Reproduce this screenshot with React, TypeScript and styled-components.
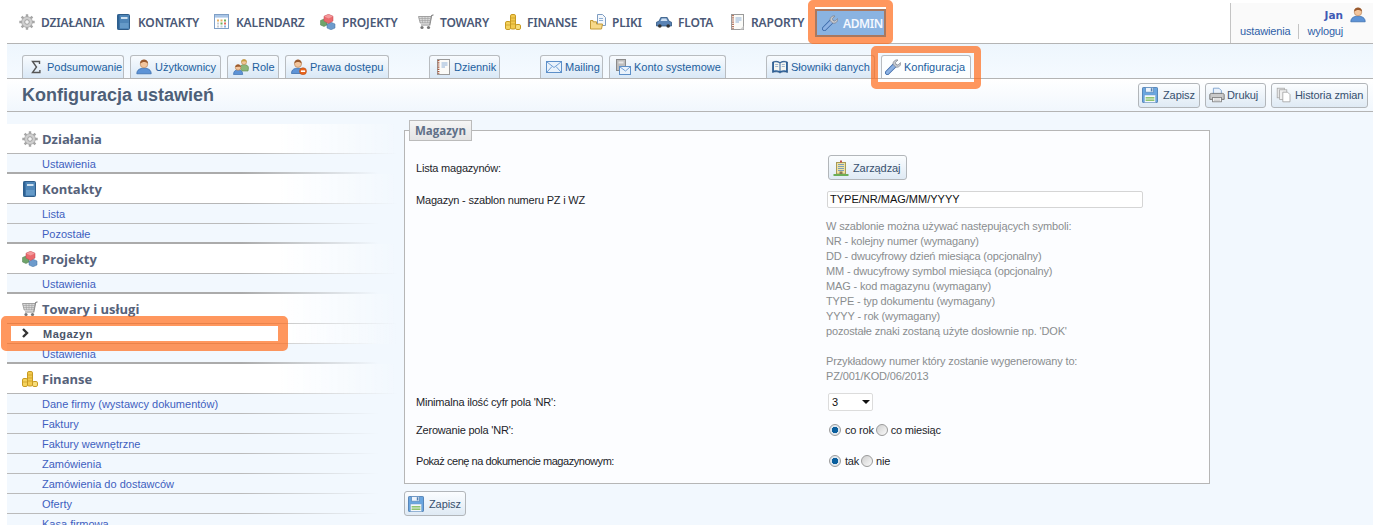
import React from "react";
import styled, { createGlobalStyle } from "styled-components";

const Global = createGlobalStyle`
  html, body { margin: 0; padding: 0; height: 525px; overflow: hidden; background: #fff; }
  body { font-family: "Liberation Sans", "Noto Sans", sans-serif; font-size: 11px; color: #222; }
`;

const Page = styled.div`
  position: relative;
  width: 1373px;
  height: 525px;
  overflow: hidden;
  padding-left: 7px;
  box-sizing: border-box;
`;

/* ---------- icons ---------- */
type IconProps = { size?: number };
const Svg = styled.svg`
  flex: none;
  display: block;
`;
const I: React.FC<IconProps & { children: React.ReactNode }> = ({ size = 16, children }) => (
  <Svg width={size} height={size} viewBox="0 0 16 16">{children}</Svg>
);

const Gear = (p: IconProps) => (
  <I {...p}>
    <g stroke="#a6a6a6" strokeWidth="2.400">
      <path d="M8 0.300v3M8 12.700v3M0.300 8h3M12.700 8h3M2.600 2.600l2 2M11.400 11.400l2 2M13.400 2.600l-2 2M4.600 11.400l-2 2" />
    </g>
    <circle cx="8" cy="8" r="5.400" fill="#cfcfcf" stroke="#a0a0a0" strokeWidth=".7" />
    <circle cx="8" cy="8" r="2.300" fill="#f4f4f4" stroke="#929292" strokeWidth=".8" />
  </I>
);
const Book = (p: IconProps) => (
  <I {...p}>
    <rect x="1.500" y="0.500" width="12" height="15" rx="1" fill="#4f86b8" stroke="#2f5c88" />
    <rect x="1.500" y="0.500" width="2" height="15" fill="#2f6294" />
    <rect x="5" y="3" width="6.500" height="2" fill="#cfe1f0" />
    <rect x="4" y="9" width="8.500" height="5" fill="#659ac8" />
  </I>
);
const Calendar = (p: IconProps) => (
  <I {...p}>
    <rect x="0.500" y="0.500" width="14" height="14" fill="#fff" stroke="#7f9fc6" />
    <rect x="1" y="1" width="13" height="2.600" fill="#a9c5e6" />
    <path d="M3 5.500h2v2H3zM6.500 5.500h2v2h-2z" fill="#e8b060" />
    <path d="M10 5.500h2v2h-2zM6.500 8.500h2v2h-2z" fill="#6fae58" />
    <path d="M3 8.500h2v2H3zM3 11.500h2v2H3zM6.500 11.500h2v2h-2z" fill="#c8cdd3" />
    <path d="M10 8.500h2v2h-2z" fill="#e26a5a" />
    <path d="M10 11.500h2v2h-2z" fill="#8ab2dc" />
  </I>
);
const Cubes = (p: IconProps) => (
  <I {...p}>
    <path d="M0.500 6.500 4 5l3 1.500V11l-3 1.500L0.500 11z" fill="#6fa36a" stroke="#4f7d4e" strokeWidth=".5" />
    <path d="M7 10 11 8.200l4 1.800v4L11 15.800 7 14z" fill="#6d9bcc" stroke="#43709f" strokeWidth=".5" />
    <path d="M4 2.200 8.500 0.300 13 2.200V7L8.500 9.400 4 7z" fill="#ea6a6e" stroke="#c04850" strokeWidth=".5" />
    <path d="M4.200 2.400 8.500 4.400l4.400-2-4.400-1.800z" fill="#f49a9c" />
  </I>
);
const Cart = (p: IconProps) => (
  <I {...p}>
    <path d="M15.500 0.800 13.600 1.600 11.800 11H3" fill="none" stroke="#8a8a8a" strokeWidth="1.200" />
    <path d="M0.500 2.500h12.600L11.900 9H2.200z" fill="#dadada" stroke="#8f8f8f" strokeWidth=".8" />
    <path d="M1 4.500h11.500M1.500 6.500h10.500M4 2.500l.6 6.500M7 2.500V9M10 2.500 9.600 9" stroke="#9d9d9d" strokeWidth=".6" fill="none" />
    <circle cx="4" cy="13.500" r="1.600" fill="#777" />
    <circle cx="10.500" cy="13.500" r="1.600" fill="#777" />
  </I>
);
const Coins = (p: IconProps) => (
  <I {...p}>
    <rect x="5.500" y="0.500" width="5" height="14.500" rx="1.400" fill="#f2c94c" stroke="#c79a22" />
    <rect x="0.500" y="7.500" width="5" height="8" rx="1.400" fill="#f4d35e" stroke="#c79a22" />
    <rect x="10.500" y="10.500" width="5" height="5" rx="1.400" fill="#f7dd7a" stroke="#c79a22" />
    <path d="M6 4h4M6 7h4M6 10h4M1 11h4" stroke="#c79a22" strokeWidth=".7" />
  </I>
);
const Folder = (p: IconProps) => (
  <I {...p}>
    <path d="M7.500 0.500h5l3 3v8h-8z" fill="#f4f7fb" stroke="#7d9cc2" />
    <path d="M9 4.500h4M9 6.500h4" stroke="#8fb0d6" />
    <path d="M0.500 6.500V15h11l1-5H6.500V7.800H3V6.500z" fill="#f7d98a" stroke="#c39a38" />
  </I>
);
const Car = (p: IconProps) => (
  <I {...p}>
    <path d="M3 7.200 4.800 3.500h6.400L13 7.200l2.500 1V12H.5V8.200z" fill="#5a83b4" stroke="#2e5580" strokeWidth=".8" />
    <path d="M4.600 7 5.700 4.600h4.600L11.400 7z" fill="#cfe0f2" />
    <circle cx="3.800" cy="12" r="1.800" fill="#333" />
    <circle cx="12.200" cy="12" r="1.800" fill="#333" />
  </I>
);
const Report = (p: IconProps) => (
  <I {...p}>
    <rect x="2.500" y="0.500" width="12" height="15" fill="#fbfbf8" stroke="#9b9b9b" />
    <path d="M4 1v14" stroke="#a8563a" strokeWidth="1.600" strokeDasharray="1.200 1" />
    <path d="M6.500 4h6M6.500 6h6M6.500 8h3.500" stroke="#8fb0d6" />
    <path d="M11 15.500 14.500 12v3.500z" fill="#cfcfcf" />
  </I>
);
const Wrench = (p: IconProps) => (
  <I {...p}>
    <path d="M2.400 13.600 9.200 6.800" stroke="#3a68a8" strokeWidth="4.800" strokeLinecap="round" />
    <path d="M2.400 13.600 9.200 6.800" stroke="#8db2e3" strokeWidth="3.200" strokeLinecap="round" />
    <path d="M8 5.400C7.800 2.600 10 .4 13 1l-2.600 2.500.6 2 2 .6L15.500 3.600c.5 3-1.600 5-4.600 4.600z" fill="#c8ccd2" stroke="#7c8088" strokeWidth=".7" />
  </I>
);
const Sigma = (p: IconProps) => (
  <I {...p}>
    <path d="M11.500 5V2.500H4.500L8.500 8 4.500 13.500h7.400V11" fill="none" stroke="#555" strokeWidth="1.400" />
  </I>
);
const User = (p: IconProps) => (
  <I {...p}>
    <path d="M0.800 14.800c0-4 3-5.600 7.200-5.600s7.200 1.600 7.200 5.600z" fill="#5d93d6" stroke="#2f64a8" strokeWidth=".7" />
    <circle cx="8" cy="5" r="3.800" fill="#f3c59c" stroke="#b07c50" strokeWidth=".6" />
    <path d="M4 4.600C4 1.800 6 .6 8 .6s4 1.200 4 4c-1.500-1.200-3-1.600-4-1.600S5.400 3.500 4 4.600z" fill="#9a5a2e" />
  </I>
);
const Users = (p: IconProps) => (
  <I {...p}>
    <path d="M7 9c0-2.500 1.800-3.400 4-3.400s4.500.9 4.500 3.400L15 12H9z" fill="#8db77a" stroke="#5b8b4c" strokeWidth=".6" />
    <circle cx="11" cy="3" r="2.600" fill="#f0c69a" stroke="#b8884c" strokeWidth=".6" />
    <path d="M8.400 2.800C8.400 1 10 .4 11 .4s2.600.6 2.600 2.400c-1-.8-4-.8-5.200 0z" fill="#c8a040" />
    <path d="M0.500 15.500c0-3.500 1.900-4.600 4.600-4.600s4.600 1.100 4.600 4.600z" fill="#5d93d6" stroke="#2f64a8" strokeWidth=".6" />
    <circle cx="5.100" cy="8.400" r="2.800" fill="#f3c59c" stroke="#b07c50" strokeWidth=".6" />
    <path d="M2.300 8.300C2.300 6.500 3.800 5.600 5.100 5.600S7.900 6.500 7.900 8.300c-1-.8-4.600-.8-5.600 0z" fill="#9a5a2e" />
  </I>
);
const UserBlock = (p: IconProps) => (
  <I {...p}>
    <path d="M0.500 14.500c0-4 2.700-5.300 6.500-5.300s6.500 1.300 6.500 5.300z" fill="#5d93d6" stroke="#2f64a8" strokeWidth=".7" />
    <circle cx="7" cy="4.800" r="3.600" fill="#f3c59c" stroke="#b07c50" strokeWidth=".6" />
    <path d="M3.400 4.500C3.400 1.800 5.200.6 7 .6s3.600 1.200 3.600 3.900C9.200 3.400 8 3 7 3S4.700 3.400 3.400 4.500z" fill="#9a5a2e" />
    <circle cx="12" cy="12.200" r="3.500" fill="#e8641e" stroke="#b04a10" strokeWidth=".5" />
    <rect x="9.900" y="11.400" width="4.200" height="1.600" fill="#fff" />
  </I>
);
const Journal = (p: IconProps) => (
  <I {...p}>
    <rect x="2.500" y="0.500" width="12" height="15" fill="#fbfbf8" stroke="#9b9b9b" />
    <path d="M3.500 1v14" stroke="#a8563a" strokeWidth="1.800" strokeDasharray="1.200 1" />
    <path d="M6.500 4h6M6.500 6h6M6.500 8h3.500" stroke="#8fb0d6" />
  </I>
);
const Mail = (p: IconProps) => (
  <I {...p}>
    <rect x="0.500" y="2.500" width="15" height="11" fill="#e9f2fb" stroke="#5d8fc8" />
    <path d="M1 3l7 5.500L15 3M1 13l5-5.500M15 13l-5-5.500" fill="none" stroke="#6f9fd6" />
  </I>
);
const SysMail = (p: IconProps) => (
  <I {...p}>
    <rect x="1.500" y="0.500" width="9" height="11" fill="#bdbdbd" stroke="#8a8a8a" />
    <rect x="3.500" y="2.500" width="5" height="2" fill="#e6e6e6" />
    <rect x="4.500" y="7.500" width="11" height="8" fill="#e9f2fb" stroke="#5d8fc8" />
    <path d="M5 8l5.500 4L15 8" fill="none" stroke="#6f9fd6" />
  </I>
);
const OpenBook = (p: IconProps) => (
  <I {...p}>
    <path d="M0.500 3C3 2 6 2 8 3.500 10 2 13 2 15.500 3v10.500C13 12.500 10 12.500 8 14c-2-1.500-5-1.500-7.500-.5z" fill="#2f639c" stroke="#1f4a78" strokeWidth=".6" />
    <path d="M2 3.500C4 3 6 3 7.500 4.200V12C6 11 4 11 2 11.500zM14 3.500C12 3 10 3 8.500 4.200V12C10 11 12 11 14 11.500z" fill="#f6f6f0" />
    <path d="M3.200 5.500h3M3.200 7.500h3M9.800 5.500h3M9.800 7.500h3" stroke="#8aa6c4" strokeWidth=".8" />
  </I>
);
const Floppy = ({ size = 16 }: IconProps) => (
  <Svg width={size} height={size} viewBox="0 0 20 20">
    <rect x="0.500" y="0.500" width="19" height="19" rx="1.500" fill="#6aa6e0" stroke="#3b6da6" />
    <rect x="4.500" y="0.500" width="10" height="6" fill="#eef4fb" stroke="#5f8ebf" />
    <rect x="11" y="1.500" width="2" height="4" fill="#4f7fb4" />
    <rect x="3" y="10" width="14" height="9.500" fill="#f4f8fc" stroke="#6f9ac8" strokeWidth=".6" />
    <rect x="4.500" y="12.500" width="11" height="2" fill="#8fc46f" />
    <rect x="4.500" y="15.500" width="11" height="2" fill="#8fc46f" />
  </Svg>
);
const Printer = ({ size = 16 }: IconProps) => (
  <Svg width={size} height={size} viewBox="0 0 20 20">
    <path d="M5.500 1.500h7l3 3v6h-10z" fill="#e9f1fb" stroke="#6d95c6" />
    <path d="M1 10c0-1.500 1-2 2-2h14c1 0 2 .5 2 2v5.500H1z" fill="#c9c9c9" stroke="#666" />
    <rect x="4.500" y="13" width="11" height="5.500" fill="#fafafa" stroke="#777" />
    <path d="M6 15h8M6 16.800h8" stroke="#aaa" strokeWidth=".7" />
  </Svg>
);
const Copies = ({ size = 16 }: IconProps) => (
  <Svg width={size} height={size} viewBox="0 0 20 20">
    <rect x="1.500" y="1.500" width="9" height="12" fill="#e8e8e8" stroke="#a8a8a8" />
    <rect x="4.500" y="3.500" width="9" height="12" fill="#f0f0f0" stroke="#a8a8a8" />
    <path d="M8.500 6.500h6l3 3v9h-9z" fill="#fff" stroke="#a0a0a0" />
  </Svg>
);
const Building = (p: IconProps) => (
  <I {...p}>
    <rect x="3.500" y="2.500" width="9" height="11.500" fill="#efe2a4" stroke="#a89a55" />
    <path d="M5 4.500h6M5 6.500h6M5 8.500h6M5 10.500h6" stroke="#7f9fb8" />
    <rect x="6.500" y="11.500" width="3" height="3" fill="#8a7a50" />
    <path d="M7 0.500h2v2H7z" fill="#c0504d" />
    <path d="M0.500 15h15" stroke="#6bae56" strokeWidth="2" />
  </I>
);

/* ---------- top bar ---------- */
const TopBar = styled.header`
  display: flex;
  height: 43px;
  border-bottom: 1px solid #b4b4b4;
  box-sizing: content-box;
`;
const MainNav = styled.nav`
  display: flex;
  align-items: center;
  flex: 1;
  padding: 3px 0 0 12px;
  gap: 15px;
`;
const NavItem = styled.a<{ $w?: number }>`
  display: flex;
  align-items: center;
  flex: none;
  gap: 6px;
  width: ${(p) => (p.$w ? `${p.$w}px` : "auto")};
  margin-bottom: 2px;
  font-family: "Noto Sans", sans-serif;
  font-size: 12px;
  font-weight: 600;
  letter-spacing: -0.15px;
  white-space: nowrap;
  color: #4a5876;
`;
const AdminItem = styled(NavItem)`
  gap: 5px;
  width: 71px;
  height: 28px;
  margin: 0 0 0 -5px;
  padding-left: 5px;
  box-sizing: border-box;
  border: 2px solid #a9785f;
  background: #8ab3e1;
  color: #f4f8ff;
  letter-spacing: -0.4px;
`;
const UserBox = styled.div`
  width: 143px;
  margin-top: 3px;
  border-left: 1px solid #c4c4c4;
  background: #fafafa;
  box-sizing: border-box;
  padding: 2px 7px 0 9px;
`;
const UserName = styled.div`
  display: flex;
  justify-content: flex-end;
  align-items: center;
  gap: 7px;
  height: 19px;
  font-family: "DejaVu Sans", sans-serif;
  font-size: 10.5px;
  font-weight: 700;
  color: #3f5bb5;
`;
const UserLinks = styled.div`
  display: flex;
  align-items: center;
  font-size: 11px;
  line-height: 15px;
  letter-spacing: -0.15px;
`;
const UserLink = styled.a`
  color: #2f61a8;
`;
const LinkSep = styled.span`
  width: 1px;
  height: 15px;
  background: #c4c4c4;
  margin: 0 8px;
`;

/* ---------- tabs ---------- */
const TabBar = styled.div`
  display: flex;
  align-items: flex-end;
  height: 34px;
  padding-left: 15px;
  background: linear-gradient(#eef6fd, #f5faff);
  border-bottom: 1px solid #b4b4b4;
`;
const TabGroup = styled.div`
  display: flex;
  gap: 6px;
  margin-right: 40px;
`;
const Tab = styled.a<{ $active?: boolean; $w: number }>`
  display: flex;
  align-items: center;
  gap: 3px;
  width: ${(p) => p.$w}px;
  height: 23px;
  box-sizing: border-box;
  padding: 0 0 0 ${(p) => (p.$active ? 3 : 5)}px;
  border: 1px solid #b8bcc0;
  border-bottom: none;
  border-radius: 3px 3px 0 0;
  background: ${(p) => (p.$active ? "#fcfeff" : "linear-gradient(#f8fbfe, #d9e8f6)")};
  color: #1d5f9e;
  font-size: 11px;
  white-space: nowrap;
`;

/* ---------- title ---------- */
const TitleBar = styled.div`
  display: flex;
  align-items: center;
  justify-content: space-between;
  height: 32px;
  padding: 0 5px 0 15px;
  background: linear-gradient(#ffffff, #f1f7fd);
  border-bottom: 1px solid #b4b4b4;
`;
const Title = styled.h1`
  margin: 0;
  font-size: 18px;
  font-weight: 700;
  color: #4d5f78;
`;
const Actions = styled.div`
  display: flex;
  gap: 5px;
`;
const Btn = styled.button<{ $w: number; $gap?: number; $pad?: number }>`
  display: inline-flex;
  align-items: center;
  gap: ${(p) => p.$gap ?? 5}px;
  width: ${(p) => p.$w}px;
  height: 25px;
  box-sizing: border-box;
  padding: 0 0 0 ${(p) => p.$pad ?? 3}px;
  border: 1px solid #b2b6ba;
  border-radius: 3px;
  background: linear-gradient(#fbfdff, #dfeaf4);
  color: #37506e;
  font-family: inherit;
  font-size: 11px;
  letter-spacing: -0.1px;
  white-space: nowrap;
`;

/* ---------- body ---------- */
const Body = styled.div`
  display: flex;
  height: 413px;
  background: #f2f8fe;
`;
const Sidebar = styled.aside`
  width: 390px;
  flex: none;
  padding-top: 12px;
  overflow: hidden;
`;
const Head = styled.div`
  display: flex;
  align-items: center;
  gap: 4px;
  height: 30px;
  box-sizing: border-box;
  padding: 1px 0 0 15px;
  background: linear-gradient(90deg, #ffffff 70%, rgba(255, 255, 255, 0));
  border-bottom: 1px solid;
  border-image: linear-gradient(90deg, #b6b6b6 60%, rgba(182, 182, 182, 0) 100%) 1;
  font-family: "Open Sans", sans-serif;
  font-size: 13px;
  font-weight: 700;
  color: #56627a;
`;
const Item = styled.a<{ $last?: boolean }>`
  display: flex;
  align-items: center;
  height: 20px;
  box-sizing: border-box;
  padding: ${(p) => (p.$last ? 1 : 0)}px 0 0 35px;
  border-bottom: ${(p) => (p.$last ? 2 : 1)}px solid;
  border-image: ${(p) =>
      p.$last
        ? "linear-gradient(90deg, #ababab 60%, rgba(171,171,171,0) 95%)"
        : "linear-gradient(90deg, #bbbbbb 60%, rgba(187,187,187,0) 95%)"}
    1;
  color: #3e5fc0;
  font-size: 11px;
  white-space: nowrap;
`;
const ActiveItem = styled(Item)`
  position: relative;
  padding-left: 36px;
  font-weight: 700;
  letter-spacing: 0.5px;
  color: #4a5468;
  background: linear-gradient(90deg, #fff 72%, rgba(255, 255, 255, 0));
`;
const Chevron = styled.svg`
  position: absolute;
  left: 14px;
  top: 4px;
`;
const Content = styled.main`
  padding: 9px 0 0 7px;
`;
const Fieldset = styled.section`
  position: relative;
  width: 806px;
  height: 354px;
  margin-top: 9px;
  box-sizing: border-box;
  padding: 24px 11px 0;
  background: #fcfdff;
  border: 1px solid #b6b6b6;
`;
const Legend = styled.div`
  position: absolute;
  top: -11px;
  left: 4px;
  display: flex;
  align-items: center;
  justify-content: center;
  width: 63px;
  height: 21px;
  box-sizing: border-box;
  border: 1px solid #bbbbbb;
  background: linear-gradient(#f5f5f5, #e4e4e4);
  font-family: "Open Sans", sans-serif;
  font-size: 11.5px;
  font-weight: 700;
  color: #5f7088;
`;
const Row = styled.div<{ $h: number; $top?: number }>`
  display: flex;
  align-items: center;
  height: ${(p) => p.$h}px;
  margin-top: ${(p) => p.$top ?? 0}px;
`;
const Label = styled.div<{ $tight?: boolean }>`
  width: 412px;
  flex: none;
  color: #1d1d2a;
  letter-spacing: ${(p) => (p.$tight ? -0.45 : -0.2)}px;
`;
const TextField = styled.div`
  width: 316px;
  height: 17px;
  margin-left: -1px;
  box-sizing: border-box;
  padding-left: 2px;
  border: 1px solid #d5d5d5;
  border-radius: 2px;
  background: #fff;
  line-height: 15px;
  color: #111;
`;
const Help = styled.div`
  margin: 11px 0 0 410px;
  line-height: 15px;
  height: 174px;
  color: #8a8d8f;
  letter-spacing: -0.15px;
  white-space: pre-line;
`;
const SelectBox = styled.div`
  position: relative;
  width: 45px;
  height: 18px;
  box-sizing: border-box;
  padding-left: 3px;
  border: 1px solid #dcdcdc;
  border-radius: 2px;
  background: #fff;
  line-height: 16px;
  color: #111;
`;
const Arrow = styled.span`
  position: absolute;
  right: 2px;
  top: 6px;
  width: 0;
  height: 0;
  border: 4px solid transparent;
  border-top: 4px solid #111;
`;
const Radios = styled.div`
  display: flex;
  align-items: center;
  color: #1d1d2a;
  letter-spacing: -0.2px;
`;
const Radio = styled.span<{ $on?: boolean }>`
  width: 12px;
  height: 12px;
  box-sizing: border-box;
  margin-left: ${(p) => (p.$on ? 1 : 0)}px;
  margin-right: ${(p) => (p.$on ? 4 : 3)}px;
  border-radius: 50%;
  border: 1px solid #9a9a9a;
  background: ${(p) =>
    p.$on ? "radial-gradient(circle, #0a5f9e 0 3px, #dfe7ee 3.5px)" : "linear-gradient(135deg, #cfcfcf, #fafafa)"};
`;
const RadioText = styled.span`
  margin-right: 2px;
`;
const BottomBtn = styled.div`
  margin-top: 7px;
`;

/* ---------- overlays ---------- */
const Mark = styled.div<{ $x: number; $y: number; $w: number; $h: number }>`
  position: absolute;
  left: ${(p) => p.$x}px;
  top: ${(p) => p.$y}px;
  width: ${(p) => p.$w}px;
  height: ${(p) => p.$h}px;
  box-sizing: border-box;
  border: 10px solid rgba(255, 107, 26, 0.7);
  border-radius: 5px;
  pointer-events: none;
`;
const MarkThin = styled(Mark)`
  border-width: 7px;
`;

/* ---------- data ---------- */
const nav: [string, number, React.ReactNode][] = [
  ["DZIAŁANIA", 82, <Gear />],
  ["KONTAKTY", 83, <Book />],
  ["KALENDARZ", 91, <Calendar />],
  ["PROJEKTY", 83, <Cubes />],
  ["TOWARY", 72, <Cart />],
  ["FINANSE", 70, <Coins />],
  ["PLIKI", 51, <Folder />],
  ["FLOTA", 58, <Car />],
  ["RAPORTY", 76, <Report />],
];

const tabGroups: { label: string; w: number; icon: React.ReactNode; active?: boolean }[][] = [
  [
    { label: "Podsumowanie", w: 102, icon: <Sigma /> },
    { label: "Użytkownicy", w: 91, icon: <User /> },
    { label: "Role", w: 52, icon: <Users /> },
    { label: "Prawa dostępu", w: 104, icon: <UserBlock /> },
  ],
  [{ label: "Dziennik", w: 71, icon: <Journal /> }],
  [
    { label: "Mailing", w: 63, icon: <Mail /> },
    { label: "Konto systemowe", w: 117, icon: <SysMail /> },
  ],
  [
    { label: "Słowniki danych", w: 109, icon: <OpenBook /> },
    { label: "Konfiguracja", w: 90, icon: <Wrench />, active: true },
  ],
];

const sections: { title: string; icon: React.ReactNode; items: string[] }[] = [
  { title: "Działania", icon: <Gear />, items: ["Ustawienia"] },
  { title: "Kontakty", icon: <Book />, items: ["Lista", "Pozostałe"] },
  { title: "Projekty", icon: <Cubes />, items: ["Ustawienia"] },
  { title: "Towary i usługi", icon: <Cart />, items: ["Magazyn", "Ustawienia"] },
  {
    title: "Finanse",
    icon: <Coins />,
    items: [
      "Dane firmy (wystawcy dokumentów)",
      "Faktury",
      "Faktury wewnętrzne",
      "Zamówienia",
      "Zamówienia do dostawców",
      "Oferty",
      "Kasa firmowa",
    ],
  },
];

const helpText = `W szablonie można używać następujących symboli:
NR - kolejny numer (wymagany)
DD - dwucyfrowy dzień miesiąca (opcjonalny)
MM - dwucyfrowy symbol miesiąca (opcjonalny)
MAG - kod magazynu (wymagany)
TYPE - typ dokumentu (wymagany)
YYYY - rok (wymagany)
pozostałe znaki zostaną użyte dosłownie np. 'DOK'

Przykładowy numer który zostanie wygenerowany to:
PZ/001/KOD/06/2013`;

export default function App() {
  return (
    <Page>
      <Global />
      <TopBar>
        <MainNav>
          {nav.map(([label, w, icon]) => (
            <NavItem key={label} $w={w}>
              {icon}
              {label}
            </NavItem>
          ))}
          <AdminItem>
            <Wrench />
            ADMIN
          </AdminItem>
        </MainNav>
        <UserBox>
          <UserName>
            Jan <User />
          </UserName>
          <UserLinks>
            <UserLink>ustawienia</UserLink>
            <LinkSep />
            <UserLink>wyloguj</UserLink>
          </UserLinks>
        </UserBox>
      </TopBar>

      <TabBar>
        {tabGroups.map((group, i) => (
          <TabGroup key={i}>
            {group.map((t) => (
              <Tab key={t.label} $w={t.w} $active={t.active}>
                {t.icon}
                {t.label}
              </Tab>
            ))}
          </TabGroup>
        ))}
      </TabBar>

      <TitleBar>
        <Title>Konfiguracja ustawień</Title>
        <Actions>
          <Btn $w={62}>
            <Floppy />
            Zapisz
          </Btn>
          <Btn $w={61} $gap={2}>
            <Printer />
            Drukuj
          </Btn>
          <Btn $w={97} $gap={3} $pad={4}>
            <Copies />
            Historia zmian
          </Btn>
        </Actions>
      </TitleBar>

      <Body>
        <Sidebar>
          {sections.map((s) => (
            <div key={s.title}>
              <Head>
                {s.icon}
                {s.title}
              </Head>
              {s.items.map((it, i) =>
                it === "Magazyn" ? (
                  <ActiveItem key={it}>
                    <Chevron width="10" height="10" viewBox="0 0 10 10">
                      <path d="M2 1l4 4-4 4" fill="none" stroke="#333" strokeWidth="2.400" />
                    </Chevron>
                    {it}
                  </ActiveItem>
                ) : (
                  <Item key={it} $last={i === s.items.length - 1 && s.title !== "Finanse"}>
                    {it}
                  </Item>
                )
              )}
            </div>
          ))}
        </Sidebar>
        <Content>
          <Fieldset>
            <Legend>Magazyn</Legend>
            <Row $h={25}>
              <Label>Lista magazynów:</Label>
              <Btn $w={79} $gap={4} $pad={4}>
                <Building />
                Zarządzaj
              </Btn>
            </Row>
            <Row $h={17} $top={11}>
              <Label>Magazyn - szablon numeru PZ i WZ</Label>
              <TextField>TYPE/NR/MAG/MM/YYYY</TextField>
            </Row>
            <Help>{helpText}</Help>
            <Row $h={18}>
              <Label>Minimalna ilość cyfr pola 'NR':</Label>
              <SelectBox>
                3<Arrow />
              </SelectBox>
            </Row>
            <Row $h={16} $top={11}>
              <Label>Zerowanie pola 'NR':</Label>
              <Radios>
                <Radio $on />
                <RadioText>co rok</RadioText>
                <Radio />
                <RadioText>co miesiąc</RadioText>
              </Radios>
            </Row>
            <Row $h={16} $top={15}>
              <Label $tight>Pokaż cenę na dokumencie magazynowym:</Label>
              <Radios>
                <Radio $on />
                <RadioText>tak</RadioText>
                <Radio />
                <RadioText>nie</RadioText>
              </Radios>
            </Row>
          </Fieldset>
          <BottomBtn>
            <Btn $w={62}>
              <Floppy />
              Zapisz
            </Btn>
          </BottomBtn>
        </Content>
      </Body>

      <MarkThin $x={808} $y={0} $w={85} $h={44} />
      <MarkThin $x={871} $y={46} $w={110} $h={43} />
      <Mark $x={1} $y={316} $w={287} $h={35} />
    </Page>
  );
}
